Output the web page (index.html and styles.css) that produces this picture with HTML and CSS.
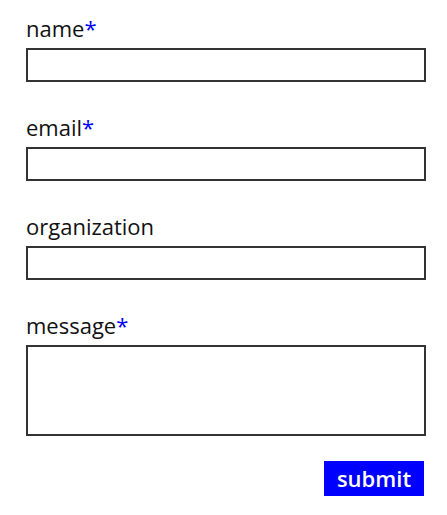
FILE: index.html
```html
<!DOCTYPE html>
<html>
<head>
<meta charset="utf-8">
<link rel="stylesheet" href="styles.css">
</head>
<body>
<form class="contact">
  <div class="field">
    <label class="label" for="name">name<span class="req">*</span></label>
    <input class="input" id="name" type="text">
  </div>
  <div class="field">
    <label class="label" for="email">email<span class="req">*</span></label>
    <input class="input" id="email" type="email">
  </div>
  <div class="field">
    <label class="label" for="org">organization</label>
    <input class="input" id="org" type="text">
  </div>
  <div class="field">
    <label class="label" for="msg">message<span class="req">*</span></label>
    <textarea class="input textarea" id="msg"></textarea>
  </div>
  <div class="actions">
    <button class="submit" type="submit">submit</button>
  </div>
</form>
</body>
</html>
```
FILE: styles.css
```css
html, body {
  margin: 0;
  padding: 0;
  background: #fff;
}
body {
  font-family: "Open Sans", "Liberation Sans", sans-serif;
  color: #111;
}
.contact {
  width: 400px;
  padding: 16px 0 0 26px;
  display: flex;
  flex-direction: column;
}
.field {
  display: flex;
  flex-direction: column;
  margin-bottom: 33px;
}
.label {
  font-size: 22px;
  line-height: 25px;
  height: 25px;
  margin-bottom: 7px;
}
.req {
  color: #0000ff;
}
.input {
  box-sizing: border-box;
  width: 400px;
  height: 34px;
  margin: 0;
  border: 2px solid #333;
  border-radius: 0;
  background: #fff;
  font: inherit;
  padding: 0 6px;
  outline: none;
}
.textarea {
  height: 91px;
  resize: none;
  display: block;
}
.field:nth-child(4) {
  margin-bottom: 25px;
}
.actions {
  display: flex;
  justify-content: flex-end;
  padding-right: 2px;
}
.submit {
  box-sizing: border-box;
  width: 100px;
  height: 35px;
  border: none;
  border-radius: 0;
  background: #0000ff;
  color: #fff;
  font-family: "Open Sans", "Liberation Sans", sans-serif;
  font-size: 22px;
  font-weight: 600;
  line-height: 35px;
  padding: 0;
  margin: 0;
}
```
